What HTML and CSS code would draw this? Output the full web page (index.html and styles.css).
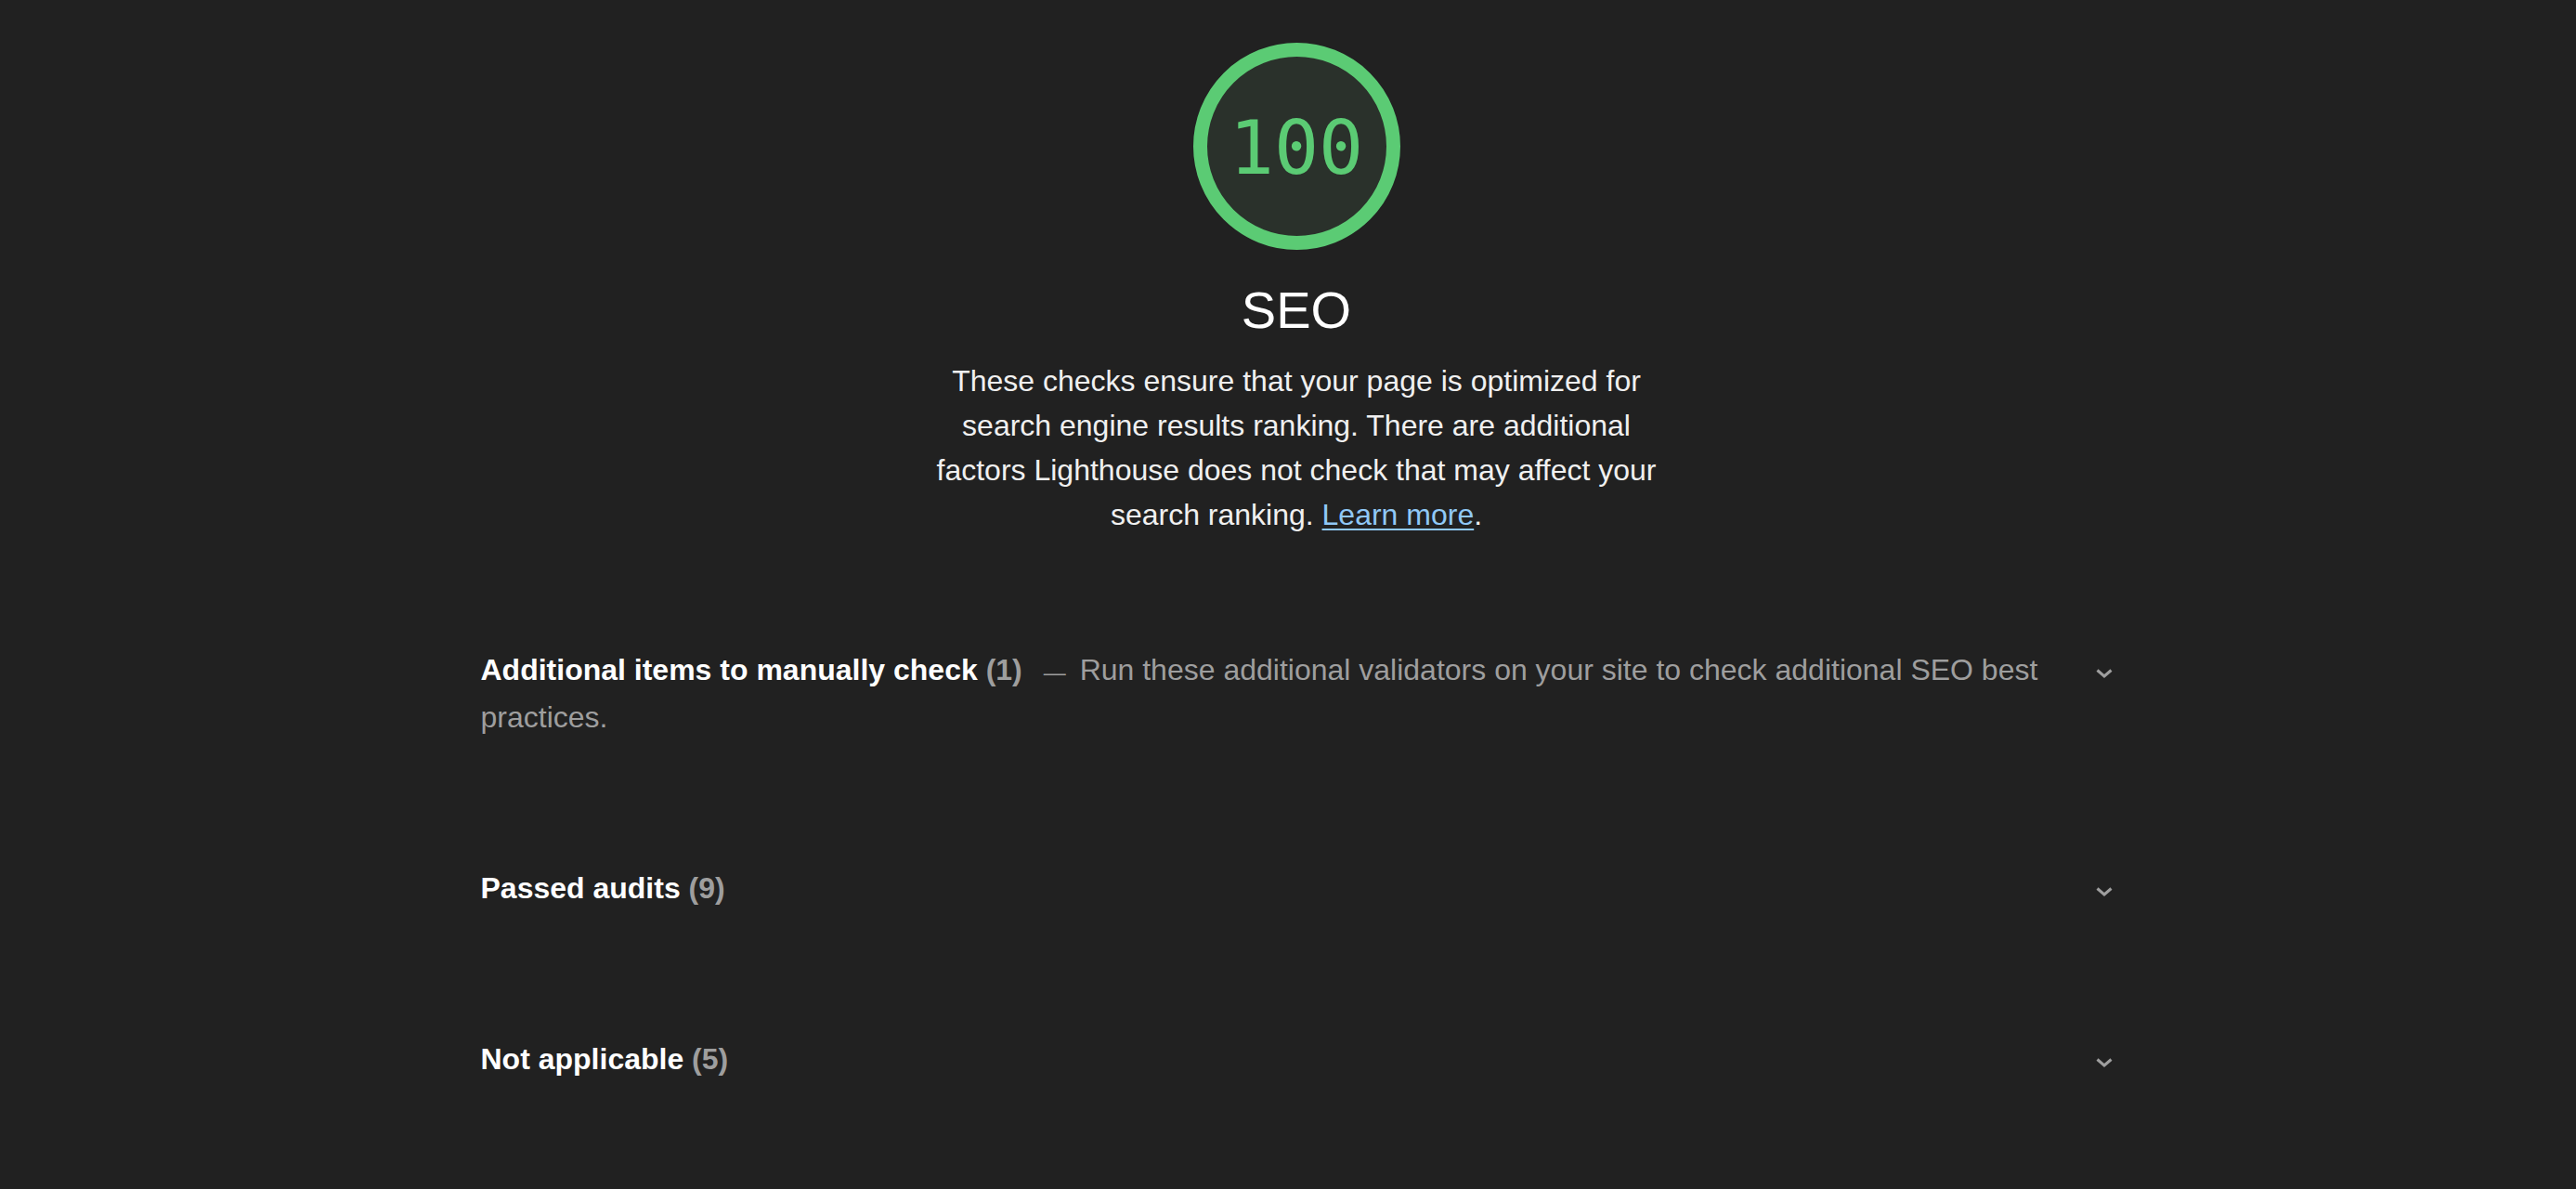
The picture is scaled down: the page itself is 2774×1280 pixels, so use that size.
FILE: index.html
```html
<!DOCTYPE html>
<html lang="en">
<head>
<meta charset="utf-8">
<title>SEO</title>
<link rel="stylesheet" href="styles.css">
</head>
<body>
<div class="report">
  <header class="category-header">
    <div class="gauge">
      <svg class="gauge-svg" width="223" height="223" viewBox="0 0 223 223">
        <circle cx="111.5" cy="111.5" r="104" class="gauge-ring"></circle>
      </svg>
      <span class="gauge-value">100</span>
    </div>
    <h1 class="category-title">SEO</h1>
    <p class="category-description">These checks ensure that your page is optimized for search engine results ranking. There are additional factors Lighthouse does not check that may affect your search ranking. <a class="link" href="#">Learn more</a>.</p>
  </header>

  <section class="groups">
    <div class="group">
      <div class="group-text">
        <span class="group-title">Additional items to manually check</span>
        <span class="group-count">(1)</span>
        <span class="group-desc">Run these additional validators on your site to check additional SEO best practices.</span>
      </div>
      <div class="chevron">
        <svg width="18" height="10" viewBox="0 0 18 10"><path d="M1.5 1.5 L9 8 L16.5 1.5" /></svg>
      </div>
    </div>
    <div class="group">
      <div class="group-text">
        <span class="group-title">Passed audits</span>
        <span class="group-count">(9)</span>
      </div>
      <div class="chevron">
        <svg width="18" height="10" viewBox="0 0 18 10"><path d="M1.5 1.5 L9 8 L16.5 1.5" /></svg>
      </div>
    </div>
    <div class="group">
      <div class="group-text">
        <span class="group-title">Not applicable</span>
        <span class="group-count">(5)</span>
      </div>
      <div class="chevron">
        <svg width="18" height="10" viewBox="0 0 18 10"><path d="M1.5 1.5 L9 8 L16.5 1.5" /></svg>
      </div>
    </div>
  </section>
</div>
</body>
</html>
```

FILE: styles.css
```css
html, body {
  margin: 0;
  padding: 0;
  background: #212121;
}

body {
  font-family: "Liberation Sans", Arial, sans-serif;
  color: #eeeeee;
}

.report {
  box-sizing: border-box;
  width: 100%;
  padding-left: 18px;
  padding-bottom: 60px;
}

.category-header {
  display: flex;
  flex-direction: column;
  align-items: center;
  padding-top: 46px;
}

.gauge {
  display: grid;
  place-items: center;
  width: 223px;
  height: 223px;
}

.gauge > * {
  grid-area: 1 / 1;
}

.gauge-svg {
  display: block;
}

.gauge-ring {
  fill: #2a312b;
  stroke: #5bcb74;
  stroke-width: 15;
}

.gauge-value {
  font-family: "DejaVu Sans Mono", "Liberation Mono", monospace;
  font-feature-settings: "zero" 1;
  font-size: 80px;
  line-height: 80px;
  color: #5bcb74;
  padding-top: 5px;
}

.category-title {
  margin: 33px 0 0;
  font-size: 56px;
  line-height: 64px;
  font-weight: normal;
  color: #ffffff;
}

.category-description {
  margin: 20px 0 0;
  max-width: 800px;
  font-size: 32px;
  line-height: 48px;
  text-align: center;
  color: #f0f0f0;
}

.link {
  color: #90c8f6;
  text-decoration: underline;
  text-decoration-thickness: 2px;
  text-underline-offset: 4px;
}

.groups {
  width: 1757px;
  margin: 51px auto 0;
}

.group {
  display: flex;
  align-items: flex-start;
  padding: 68px 0;
}

.group-text {
  flex: 1;
  font-size: 32px;
  line-height: 48px;
  color: #9e9e9e;
}

.group-title {
  font-weight: bold;
  color: #ffffff;
}

.group-count {
  font-weight: bold;
  color: #9e9e9e;
}

.group-desc::before {
  content: "\2014";
  font-size: 24px;
  margin: 0 15px 0 14px;
}

.chevron {
  margin-left: 27px;
  margin-top: 23px;
  width: 18px;
  height: 10px;
}

.chevron svg {
  display: block;
}

.chevron path {
  fill: none;
  stroke: #9e9e9e;
  stroke-width: 3;
}
```
